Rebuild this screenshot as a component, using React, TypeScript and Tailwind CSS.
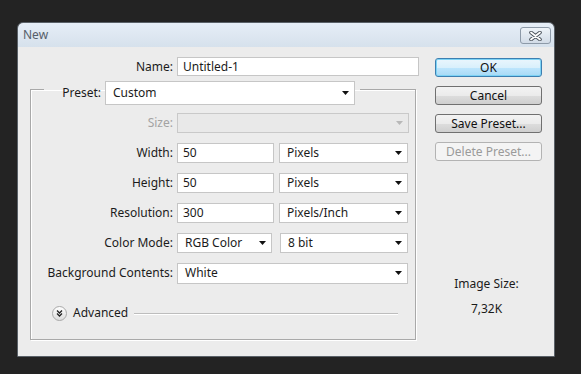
import { ReactNode } from 'react';

const font = { fontFamily: '"Noto Sans", "Segoe UI", sans-serif' };

function Arrow({ disabled = false }: { disabled?: boolean }) {
  return (
    <svg width="7" height="4" viewBox="0 0 7 4" className="shrink-0">
      <polygon points="0,0 7,0 3.5,4" fill={disabled ? '#b8b8b8' : '#111'} />
    </svg>
  );
}

function Select({ value, className = '', disabled = false }: { value?: string; className?: string; disabled?: boolean }) {
  return (
    <div
      className={`flex items-center justify-between border pl-[7px] pr-[5px] ${
        disabled ? 'border-[#c9c9c9] bg-[#e9e9e9]' : 'border-[#c6c6c6] bg-white'
      } ${className}`}
    >
      <span className="leading-none">{value}</span>
      <Arrow disabled={disabled} />
    </div>
  );
}

function Input({ value, className = '' }: { value: string; className?: string }) {
  return (
    <div className={`flex items-center border border-[#c6c6c6] bg-white pl-[5px] ${className}`}>
      <span className="leading-none">{value}</span>
    </div>
  );
}

function Row({ label, children, muted = false }: { label: string; children: ReactNode; muted?: boolean }) {
  return (
    <div className="flex h-[20px] items-center">
      <div className={`w-[146px] pr-[4px] text-right ${muted ? 'text-[#a3a3a3]' : ''}`}>{label}</div>
      {children}
    </div>
  );
}

function Button({ children, primary = false, disabled = false }: { children: ReactNode; primary?: boolean; disabled?: boolean }) {
  let cls = 'border-[#707070] bg-[linear-gradient(#f3f3f3_0%,#ebebeb_50%,#dddddd_51%,#cfcfcf_100%)] text-[#111]';
  if (primary) cls = 'border-[#3c7fb1] bg-[linear-gradient(#eaf6fd_0%,#d9f0fc_50%,#bee6fd_51%,#a7d9f5_100%)] text-[#111] shadow-[inset_0_0_0_1px_#7dd3f5]';
  if (disabled) cls = 'border-[#b3b3b3] bg-[#f4f4f4] text-[#9a9a9a]';
  return (
    <div className={`flex h-[19px] w-[107px] items-center justify-center rounded-[3px] border leading-none ${cls}`}>
      {children}
    </div>
  );
}

export default function App() {
  return (
    <div className="h-[374px] w-[581px] bg-[#232323] pl-[17px] pt-[22px] text-[12px] text-[#1b1b1b]" style={font}>
      <div className="flex h-[335px] w-[538px] flex-col overflow-hidden rounded-t-[6px] border border-[#5a6168]">
        {/* title bar */}
        <div className="flex h-[24px] items-start justify-between bg-[linear-gradient(#e6eef7,#d6e1ec)] pl-[5px] pr-[3px]">
          <span className="pt-[4px] text-[12px] leading-[15px] text-[#56606a]">New</span>
          <div className="mt-[4px] flex h-[17px] w-[31px] items-center justify-center rounded-[3px] border border-[#8d9aa8] bg-[linear-gradient(#eef3f8,#d2dce7)]">
            <svg width="13" height="10" viewBox="0 0 13 10">
              <path d="M2 1.5 L11 8.5 M11 1.5 L2 8.5" stroke="#4a525b" strokeWidth="3.6" strokeLinecap="round" />
              <path d="M2 1.5 L11 8.5 M11 1.5 L2 8.5" stroke="#ffffff" strokeWidth="1.8" strokeLinecap="round" />
            </svg>
          </div>
        </div>

        {/* client */}
        <div className="flex flex-1 bg-[#ececec]">
          <div className="flex w-[402px] flex-col pt-[10px]">
            <div className="flex h-[19px] items-center">
              <div className="w-[159px] pr-[4px] text-right">Name:</div>
              <Input value="Untitled-1" className="h-[19px] w-[242px]" />
            </div>

            <fieldset className="ml-[12px] mt-[-3px] w-[386px] border border-[#a9a9a9] pb-[18px] shadow-[1px_1px_0_#ffffff,inset_1px_1px_0_#ffffff]">
              <legend className="ml-[13px] pr-[5px] pt-[8px]">
                <div className="flex h-[24px] items-center">
                  <div className="w-[61px] pr-[4px] text-right">Preset:</div>
                  <Select value="Custom" className="h-[24px] w-[250px]" />
                </div>
              </legend>

              <div className="flex flex-col gap-[10px] pt-[8px]">
                <Row label="Size:" muted>
                  <Select disabled className="h-[20px] w-[232px]" />
                </Row>
                <Row label="Width:">
                  <Input value="50" className="h-[20px] w-[97px]" />
                  <Select value="Pixels" className="ml-[5px] h-[20px] w-[129px]" />
                </Row>
                <Row label="Height:">
                  <Input value="50" className="h-[20px] w-[97px]" />
                  <Select value="Pixels" className="ml-[5px] h-[20px] w-[129px]" />
                </Row>
                <Row label="Resolution:">
                  <Input value="300" className="h-[20px] w-[97px]" />
                  <Select value="Pixels/Inch" className="ml-[5px] h-[20px] w-[129px]" />
                </Row>
                <Row label="Color Mode:">
                  <Select value="RGB Color" className="h-[20px] w-[95px]" />
                  <Select value="8 bit" className="ml-[8px] h-[20px] w-[128px]" />
                </Row>
                <Row label="Background Contents:">
                  <Select value="White" className="h-[21px] w-[231px]" />
                </Row>
              </div>

              <div className="ml-[21px] mr-[17px] mt-[22px] flex h-[16px] items-center gap-[6px]">
                <svg width="15" height="15" viewBox="0 0 15 15" className="shrink-0">
                  <defs>
                    <linearGradient id="adv" x1="0" y1="0" x2="0" y2="1">
                      <stop offset="0" stopColor="#ffffff" />
                      <stop offset="1" stopColor="#dcdcdc" />
                    </linearGradient>
                  </defs>
                  <circle cx="7.5" cy="7.5" r="7" fill="url(#adv)" stroke="#a8a8a8" />
                  <path d="M5 4.5 L7.5 7 L10 4.5 M5 7.5 L7.5 10 L10 7.5" fill="none" stroke="#222" strokeWidth="1.3" />
                </svg>
                <span>Advanced</span>
                <div className="h-px flex-1 bg-[#bdbdbd] shadow-[0_1px_0_#ffffff]" />
              </div>
            </fieldset>
          </div>

          <div className="ml-[15px] flex w-[107px] flex-col pt-[11px]">
            <div className="flex flex-col gap-[9px]">
              <Button primary>OK</Button>
              <Button>Cancel</Button>
              <Button>Save Preset...</Button>
              <Button disabled>Delete Preset...</Button>
            </div>
            <div className="mt-[115px] pr-[4px] text-center leading-[15px]">Image Size:</div>
            <div className="mt-[10px] pr-[4px] text-center leading-[15px]">7,32K</div>
          </div>
        </div>
      </div>
    </div>
  );
}
